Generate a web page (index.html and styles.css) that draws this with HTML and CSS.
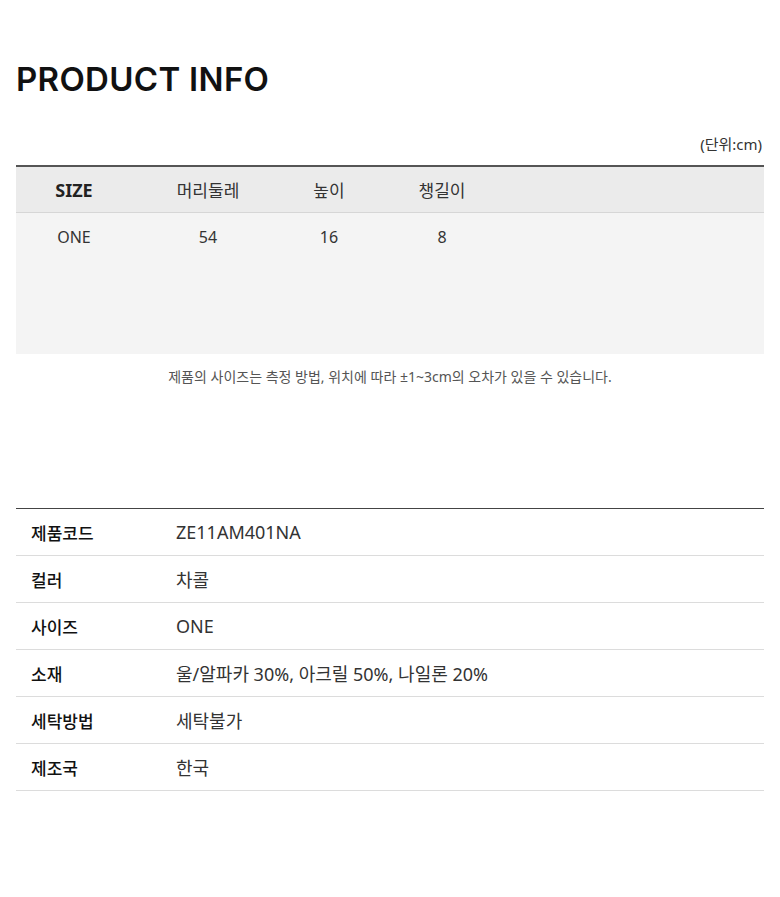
FILE: index.html
```html
<!DOCTYPE html>
<html lang="ko">
<head>
<meta charset="utf-8">
<link rel="stylesheet" href="styles.css">
</head>
<body>
<div class="page">
  <h1 class="title">PRODUCT INFO</h1>
  <div class="unit">(단위:cm)</div>
  <div class="size-table">
    <div class="size-row size-head">
      <div class="c c1 strong">SIZE</div>
      <div class="c c2">머리둘레</div>
      <div class="c c3">높이</div>
      <div class="c c4">챙길이</div>
    </div>
    <div class="size-body">
      <div class="size-row">
        <div class="c c1">ONE</div>
        <div class="c c2">54</div>
        <div class="c c3">16</div>
        <div class="c c4">8</div>
      </div>
    </div>
  </div>
  <p class="note">제품의 사이즈는 측정 방법, 위치에 따라 ±1~3cm의 오차가 있을 수 있습니다.</p>

  <div class="info-table">
    <div class="info-row"><div class="label">제품코드</div><div class="value">ZE11AM401NA</div></div>
    <div class="info-row"><div class="label">컬러</div><div class="value">차콜</div></div>
    <div class="info-row"><div class="label">사이즈</div><div class="value">ONE</div></div>
    <div class="info-row"><div class="label">소재</div><div class="value">울/알파카 30%, 아크릴 50%, 나일론 20%</div></div>
    <div class="info-row"><div class="label">세탁방법</div><div class="value">세탁불가</div></div>
    <div class="info-row"><div class="label">제조국</div><div class="value">한국</div></div>
  </div>
</div>
</body>
</html>
```

FILE: styles.css
```css
* { box-sizing: border-box; }
body {
  margin: 0;
  background: #fff;
  color: #222;
  font-family: "Noto Sans", "Noto Sans CJK KR", sans-serif;
}
.page {
  padding: 0 16px 0 16px;
  width: 780px;
}
.title {
  margin: 0;
  padding-top: 58px;
  font-family: "Inter", "Noto Sans", sans-serif;
  font-weight: 600;
  font-size: 33px;
  line-height: 42px;
  letter-spacing: 0.3px;
  color: #111;
}
.unit {
  margin-top: 34px;
  text-align: right;
  padding-right: 2px;
  font-size: 15px;
  line-height: 20px;
  color: #333;
}
.size-table {
  margin-top: 11px;
  width: 748px;
  border-top: 2px solid #555;
}
.size-row {
  display: grid;
  grid-template-columns: 116px 152px 90px 136px 1fr;
  align-items: center;
}
.size-head {
  height: 46px;
  background: #ebebeb;
  border-bottom: 1px solid #d6d6d6;
}
.size-body {
  background: #f4f4f4;
  height: 141px;
}
.size-body .size-row { height: 48px; }
.c {
  text-align: center;
  font-size: 17px;
  color: #333;
}
.size-body .c { font-size: 16px; }
.strong { font-weight: 700; color: #222; font-size: 18px; }
.note {
  margin: 12px 0 0;
  text-align: center;
  font-size: 14px;
  line-height: 22px;
  color: #555;
}
.info-table {
  margin-top: 120px;
  width: 748px;
  border-top: 1px solid #444;
}
.info-row {
  display: flex;
  align-items: center;
  height: 47px;
  border-bottom: 1px solid #dcdcdc;
}
.label {
  width: 160px;
  padding-left: 15px;
  font-size: 17px;
  font-weight: 500;
  color: #111;
}
.value {
  font-size: 18px;
  color: #333;
}
```
